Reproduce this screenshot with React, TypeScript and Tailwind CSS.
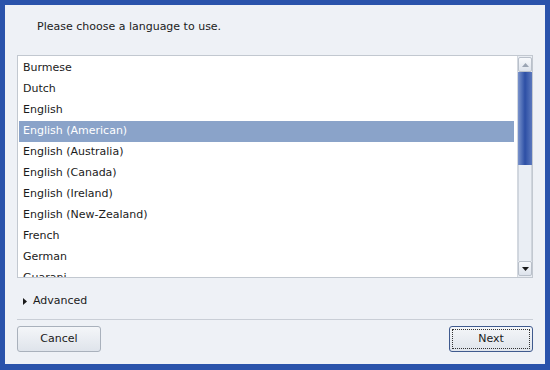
import { useState } from "react";

const languages = [
  "Burmese",
  "Dutch",
  "English",
  "English (American)",
  "English (Australia)",
  "English (Canada)",
  "English (Ireland)",
  "English (New-Zealand)",
  "French",
  "German",
  "Guarani",
];

function Scrollbar() {
  return (
    <div className="flex w-[15px] flex-col border-l border-[#d3d8df] bg-[#e9edf3] py-[1px]">
      <div className="flex h-[15px] items-center justify-center rounded-[2px] border border-[#b9c0ca] bg-gradient-to-b from-[#f7f9fc] to-[#dde3ec]">
        <svg width="7" height="4" viewBox="0 0 7 4">
          <path d="M0 4 L3.5 0 L7 4 Z" fill="#9aa4b3" />
        </svg>
      </div>
      <div className="h-[93px] bg-gradient-to-r from-[#7b93cb] via-[#2d4fa5] to-[#5b78bd]" />
      <div className="flex-1 border-x border-[#cfd5dd] bg-[#eaeef4]" />
      <div className="flex h-[15px] items-center justify-center rounded-[2px] border border-[#b9c0ca] bg-gradient-to-b from-[#f7f9fc] to-[#dde3ec]">
        <svg width="7" height="4" viewBox="0 0 7 4">
          <path d="M0 0 L3.5 4 L7 0 Z" fill="#1a1a1a" />
        </svg>
      </div>
    </div>
  );
}

export default function App() {
  const [selected, setSelected] = useState("English (American)");

  return (
    <div
      className="h-[370px] w-[550px] bg-[#2a53ab] pb-[6px] pl-[5px] pr-[5px] pt-[5px] text-[11px] text-[#1b1b1b]"
      style={{ fontFamily: '"DejaVu Sans", sans-serif' }}
    >
      <div className="flex h-full flex-col bg-[#eef1f6] px-[12px]">
        <div className="flex h-[50px] items-center pl-[20px] pb-[5px]">
          Please choose a language to use.
        </div>

        <div className="flex h-[223px] border border-[#c2c8d0] bg-white">
          <div className="flex-1 overflow-hidden pt-[2px] pl-[1px] pr-[3px]">
            {languages.map((lang) => (
              <div
                key={lang}
                onClick={() => setSelected(lang)}
                className={`flex h-[21px] items-center pl-[4px] ${
                  lang === selected ? "bg-[#8aa3c9] text-white" : ""
                }`}
              >
                {lang}
              </div>
            ))}
          </div>
          <Scrollbar />
        </div>

        <div className="flex h-[41px] items-center gap-[6px] pl-[6px] pt-[5px]">
          <svg width="4" height="7" viewBox="0 0 4 7">
            <path d="M0 0 L4 3.5 L0 7 Z" fill="#1a1a1a" />
          </svg>
          <span>Advanced</span>
        </div>

        <div className="border-t border-[#c9ced6]" />

        <div className="mt-[6px] flex items-center justify-between">
          <button className="h-[26px] w-[84px] rounded-[3px] border border-[#a9b1bc] bg-gradient-to-b from-[#f4f6f9] to-[#dfe4eb]">
            Cancel
          </button>
          <button className="h-[26px] w-[84px] rounded-[3px] border border-[#3f5a8e] bg-gradient-to-b from-[#f4f6f9] to-[#dfe4eb] p-[2px]">
            <div className="flex h-full w-full items-center justify-center border border-dotted border-[#333]">
              Next
            </div>
          </button>
        </div>
      </div>
    </div>
  );
}
